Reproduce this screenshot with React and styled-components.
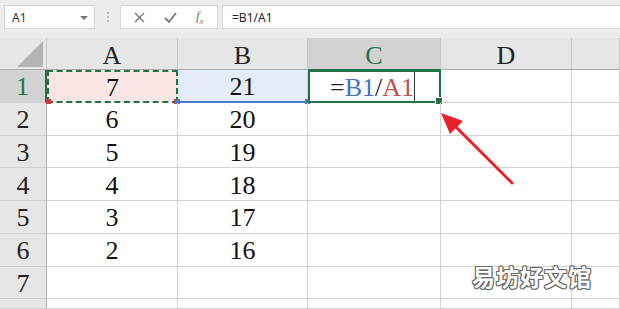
// IMPORTS
import React from 'react';

// STYLES
import styled, {createGlobalStyle} from 'styled-components'

// GLOBAL
const GlobalStyle = createGlobalStyle`
    html, body { margin: 0; padding: 0; background: #ffffff; }
    * { box-sizing: border-box; }
`

// STYLED COMPONENTS
const Sheet = styled.div`
    position: relative;
    width: 620px;
    height: 309px;
    overflow: hidden;
    background: #ffffff;
    font-family: "Liberation Serif", "Noto Sans CJK SC", serif;
`

const Toolbar = styled.div`
    display: flex;
    align-items: center;
    height: 38px;
    padding: 5px 0 9px 4px;
    background: #ececec;
    font-family: "Segoe UI", "Noto Sans", "Liberation Sans", sans-serif;
`

const NameBox = styled.div`
    display: flex;
    align-items: center;
    justify-content: space-between;
    width: 91px;
    height: 24px;
    padding: 0 6px 0 7px;
    background: #ffffff;
    border: 1px solid #d6d6d6;
    font-size: 12px;
    color: #333;
`

const Caret = styled.span`
    width: 0;
    height: 0;
    border-left: 4px solid transparent;
    border-right: 4px solid transparent;
    border-top: 4px solid #777;
    margin-top: 1px;
`

const Dots = styled.div`
    display: flex;
    flex-direction: column;
    gap: 2px;
    margin: 0 11px 0 12px;
    & span { width: 2px; height: 2px; background: #bbb; }
`

const ButtonGroup = styled.div`
    display: flex;
    align-items: center;
    justify-content: space-around;
    width: 98px;
    height: 24px;
    background: #ffffff;
    border: 1px solid #d6d6d6;
    padding: 0 4px;
    color: #7a7a7a;
`

const Fx = styled.span`
    font-family: "Liberation Serif", serif;
    font-style: italic;
    font-size: 13px;
    color: #777;
    & sub { font-size: 9px; }
`

const FormulaInput = styled.div`
    flex: 1;
    height: 24px;
    margin-left: 4px;
    display: flex;
    align-items: center;
    padding-left: 9px;
    background: #ffffff;
    border: 1px solid #d6d6d6;
    border-right: none;
    font-size: 12px;
    color: #222;
`

const Grid = styled.div`
    display: grid;
    grid-template-columns: 47px 131px 130px 133px 131px 1fr;
    grid-template-rows: 32px repeat(7, 32.75px) 1fr;
    height: 271px;
`

const Corner = styled.div`
    background: #e6e6e6;
    border-right: 1px solid #c9c9c9;
    border-bottom: 1px solid #ababab;
    display: flex;
    align-items: flex-end;
    justify-content: flex-end;
    padding: 0 3px 2px 0;
`

const ColHead = styled.div`
    display: flex;
    align-items: center;
    justify-content: center;
    background: ${p => p.$active ? '#d2d2d2' : '#e6e6e6'};
    color: ${p => p.$active ? '#217346' : '#222'};
    border-right: 1px solid #c9c9c9;
    border-bottom: 1px solid ${p => p.$active ? '#217346' : '#ababab'};
    font-size: 26px;
    padding-top: 4px;
`

const RowHead = styled.div`
    display: flex;
    align-items: center;
    justify-content: center;
    background: ${p => p.$active ? '#d2d2d2' : '#e6e6e6'};
    color: ${p => p.$active ? '#217346' : '#222'};
    border-right: 1px solid ${p => p.$active ? '#217346' : '#ababab'};
    border-right-width: ${p => p.$active ? '2px' : '1px'};
    border-bottom: 1px solid #cfcfcf;
    font-size: 26px;
    padding-top: 3px;
`

const Cell = styled.div`
    position: relative;
    display: flex;
    align-items: center;
    justify-content: center;
    border-right: 1px solid #d4d4d4;
    border-bottom: 1px solid #d4d4d4;
    font-size: 26px;
    color: #111;
    padding-top: 3px;
`

const CopyCell = styled(Cell)`
    background: #fbe6e6;
    border: 2px dashed #217346;
    border-right-color: #217346;
    &::before, &::after {
        content: '';
        position: absolute;
        width: 5px;
        height: 5px;
        background: #d0343a;
        bottom: -3px;
    }
    &::before { left: -3px; }
    &::after { right: -3px; }
`

const RefCell = styled(Cell)`
    background: #e4ecf7;
    border-bottom: 2px solid #4a78c2;
    &::before, &::after {
        content: '';
        position: absolute;
        width: 5px;
        height: 5px;
        background: #4a78c2;
        bottom: -3px;
    }
    &::before { left: -3px; }
    &::after { right: -3px; }
`

const EditCell = styled(Cell)`
    justify-content: flex-end;
    padding-right: 25px;
    border: 2px solid #217346;
    &::after {
        content: '';
        position: absolute;
        width: 6px;
        height: 6px;
        background: #217346;
        border: 1px solid #fff;
        right: -4px;
        bottom: -4px;
    }
`

const Token = styled.span`
    color: ${p => p.$color || '#222'};
`

const TextCursor = styled.span`
    position: absolute;
    right: 24px;
    top: 0;
    bottom: 0;
    width: 1px;
    background: #333;
`

const Arrow = styled.svg`
    position: absolute;
    left: 430px;
    top: 105px;
`

const Watermark = styled.div`
    position: absolute;
    left: 472px;
    top: 259px;
    font-family: "Noto Sans CJK SC", sans-serif;
    font-weight: 700;
    font-size: 23px;
    letter-spacing: 1px;
    color: #ffffff;
    text-shadow:
        1px 0 0 #6a6a6a, -1px 0 0 #6a6a6a, 0 1px 0 #6a6a6a, 0 -1px 0 #6a6a6a,
        1px 1px 0 #6a6a6a, -1px -1px 0 #6a6a6a, 1px -1px 0 #6a6a6a, -1px 1px 0 #6a6a6a;
`

// STATE
const columns = ['A', 'B', 'C', 'D', '']
const rows = [
    [7, 21], [6, 20], [5, 19], [4, 18], [3, 17], [2, 16], ['', ''],
]

// __MAIN FUNCTIONAL COMPONENT__
function App() {
    return (
        <Sheet>
            <GlobalStyle />
            <Toolbar>
                <NameBox>A1<Caret /></NameBox>
                <Dots><span /><span /><span /></Dots>
                <ButtonGroup>
                    <svg width="11" height="11" viewBox="0 0 11 11">
                        <path d="M1 1 L10 10 M10 1 L1 10" stroke="#777" strokeWidth="1.3" />
                    </svg>
                    <svg width="13" height="11" viewBox="0 0 13 11">
                        <path d="M1 6 L5 10 L12 1" stroke="#777" strokeWidth="1.8" fill="none" />
                    </svg>
                    <Fx>f<sub>x</sub></Fx>
                </ButtonGroup>
                <FormulaInput>=B1/A1</FormulaInput>
            </Toolbar>

            <Grid>
                <Corner>
                    <svg width="26" height="26" viewBox="0 0 26 26">
                        <path d="M26 0 L26 26 L0 26 Z" fill="#b4b4b4" />
                    </svg>
                </Corner>
                {columns.map((c, i) => <ColHead key={i} $active={c === 'C'}>{c}</ColHead>)}

                {rows.map((r, i) => (
                    <React.Fragment key={i}>
                        <RowHead $active={i === 0}>{i + 1}</RowHead>
                        {i === 0 ? (
                            <>
                                <CopyCell>{r[0]}</CopyCell>
                                <RefCell>{r[1]}</RefCell>
                                <EditCell>
                                    <Token>=</Token>
                                    <Token $color="#4472c4">B1</Token>
                                    <Token>/</Token>
                                    <Token $color="#c0504d">A1</Token>
                                    <TextCursor />
                                </EditCell>
                            </>
                        ) : (
                            <>
                                <Cell>{r[0]}</Cell>
                                <Cell>{r[1]}</Cell>
                                <Cell />
                            </>
                        )}
                        <Cell />
                        <Cell />
                    </React.Fragment>
                ))}
                <RowHead />
                <Cell /><Cell /><Cell /><Cell /><Cell />
            </Grid>

            <Arrow width="90" height="85" viewBox="0 0 90 85">
                <line x1="82" y1="78" x2="22" y2="18" stroke="#e8202a" strokeWidth="3" strokeLinecap="round" />
                <path d="M11 8 L33 16 L20 29 Z" fill="#e8202a" />
            </Arrow>

            <Watermark>易坊好文馆</Watermark>
        </Sheet>
    )
}

// EXPORTS
export default App;
